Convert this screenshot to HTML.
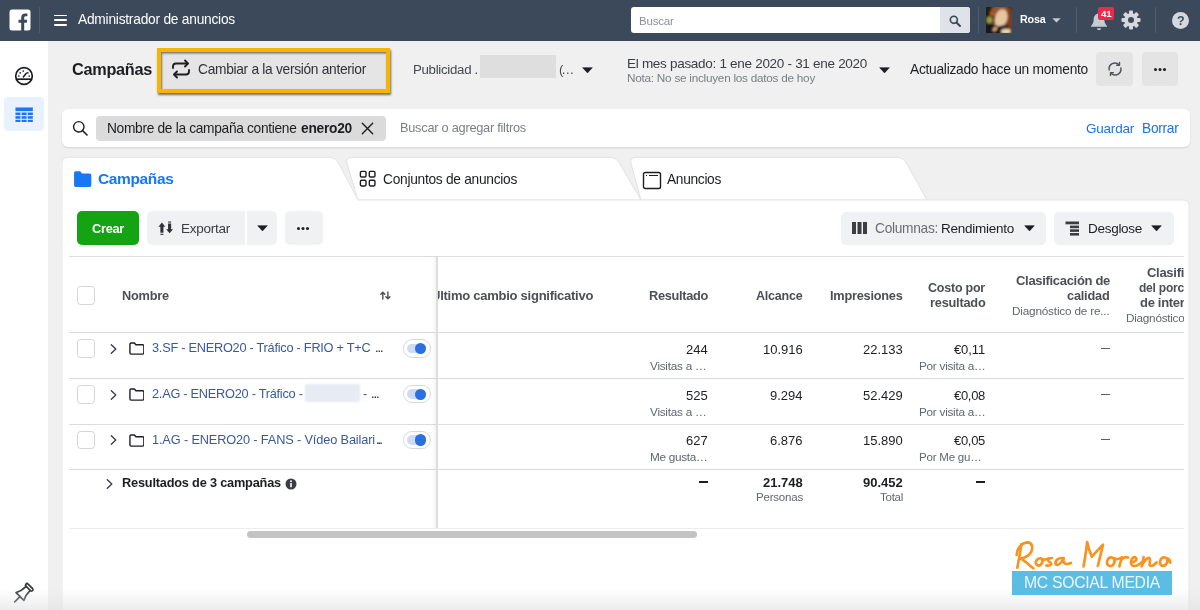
<!DOCTYPE html>
<html><head><meta charset="utf-8">
<style>
*{box-sizing:border-box;margin:0;padding:0}
html,body{width:1200px;height:610px;overflow:hidden;background:#f0f0f0;font-family:"Liberation Sans",sans-serif;color:#1c1e21}
.a{position:absolute}
.t{position:absolute;white-space:nowrap;line-height:1;will-change:transform}
.btn{position:absolute;background:#e4e4e4;border-radius:4px}
.cb{position:absolute;width:18px;height:18.500px;border:1px solid #d3d5d8;border-radius:3.500px;background:#fff}
.hl{position:absolute;height:1px;background:#dddddd}
</style></head><body>
<div class="a" style="left:0;top:0;width:1200px;height:40.500px;background:#3b495b"></div>
<div class="a" style="left:0;top:40.500px;width:48px;height:570px;background:#fff"></div>
<svg class="a" style="left:9px;top:9px" width="22" height="22" viewBox="0 0 22 22"><rect x="0.500" y="0.500" width="21" height="21" rx="2.500" fill="#fff"/><path d="M15.200 22v-8.200h2.600l.4-3.100h-3V8.800c0-.9.300-1.500 1.600-1.500h1.600V4.500c-.3 0-1.200-.1-2.300-.1-2.300 0-3.900 1.400-3.900 4v2.300H9.500v3.100h2.700V22z" fill="#3b495b"/></svg>
<div class="a" style="left:39px;top:7px;width:1.200px;height:26px;background:#4f5d74"></div>
<div class="a" style="left:978px;top:7px;width:1.200px;height:26px;background:#4f5d74"></div>
<div class="a" style="left:1076px;top:7px;width:1.200px;height:26px;background:#4f5d74"></div>
<div class="a" style="left:1155px;top:7px;width:1.200px;height:26px;background:#4f5d74"></div>
<div class="a" style="left:53.700px;top:14.7px;width:13.500px;height:1.700px;background:#fff;border-radius:1px"></div>
<div class="a" style="left:53.700px;top:19.3px;width:13.500px;height:1.700px;background:#fff;border-radius:1px"></div>
<div class="a" style="left:53.700px;top:24px;width:13.500px;height:1.700px;background:#fff;border-radius:1px"></div>
<div class="t" style="top:13px;font-size:13.75px;color:#fff;letter-spacing:-0.232px;left:78px;">Administrador de anuncios</div>
<div class="a" style="left:631px;top:7px;width:339px;height:26px;background:#fff;border-radius:3px;overflow:hidden"><div class="a" style="right:0;top:0;width:30px;height:26px;background:#dfe2e8"></div></div>
<div class="t" style="top:16px;font-size:11.5px;color:#8c9199;letter-spacing:-0.215px;left:639px;">Buscar</div>
<svg class="a" style="left:948.600px;top:14.600px" width="12.300" height="12.300" viewBox="0 0 14 14"><circle cx="5.500" cy="5.500" r="4" fill="none" stroke="#3a4350" stroke-width="1.800"/><path d="M8.500 8.500L12.500 12.500" stroke="#3a4350" stroke-width="2.200" stroke-linecap="round"/></svg>
<svg class="a" style="left:986px;top:7px" width="26" height="26" viewBox="0 0 26 26"><defs><filter id="bl" x="-20%" y="-20%" width="140%" height="140%"><feGaussianBlur stdDeviation="1.100"/></filter><clipPath id="cp"><rect width="26" height="26"/></clipPath></defs><g clip-path="url(#cp)"><rect width="26" height="26" fill="#5e3421"/><g filter="url(#bl)"><rect x="-2" y="-2" width="8" height="30" fill="#1d2418"/><ellipse cx="3.500" cy="13" rx="3" ry="3.500" fill="#9a9a3c"/><ellipse cx="6.500" cy="6.500" rx="2.500" ry="2.500" fill="#c45f28"/><ellipse cx="14" cy="3.500" rx="9" ry="5" fill="#9a5530"/><ellipse cx="23.500" cy="13" rx="3.200" ry="11" fill="#7a3f22"/><ellipse cx="15" cy="11.500" rx="6.300" ry="9.500" fill="#e6c6a0" transform="rotate(18 15 11.500)"/><path d="M-1 17L9 18L15 20L22 27L-1 27z" fill="#15121f"/><path d="M12 19.500L20 17.500L23 20L17 22z" fill="#1c1626"/><ellipse cx="20" cy="24.500" rx="5" ry="2.800" fill="#e8d6b0"/><ellipse cx="9" cy="22" rx="3" ry="1.800" fill="#d9a070" transform="rotate(-40 9 22)"/></g></g></svg>
<div class="t" style="top:14px;font-size:10.75px;color:#fff;font-weight:bold;letter-spacing:-0.197px;left:1020px;">Rosa</div>
<svg class="a" style="left:1052.400px;top:18.200px" width="9" height="5" viewBox="0 0 9 5"><path d="M0.300 0.300h8.400L4.500 4.600z" fill="#c5cad3"/></svg>
<svg class="a" style="left:1089px;top:11.500px" width="20" height="20" viewBox="0 0 20 20"><path d="M10 1.500c-3.300 0-5.300 2.500-5.300 5.800 0 3.200-1.200 5.200-2.700 6.700v.8h16V14c-1.500-1.500-2.700-3.500-2.700-6.700 0-3.300-2-5.800-5.300-5.800z" fill="#c5cad3"/><path d="M8 16.200a2 2 0 0 0 4 0z" fill="#c5cad3"/></svg>
<div class="a" style="left:1098px;top:6.800px;width:16px;height:13px;background:#f02849;border-radius:2px"></div>
<div class="t" style="top:9px;font-size:9.75px;color:#fff;font-weight:bold;letter-spacing:-0.173px;left:1100.5px;">41</div>
<svg class="a" style="left:1121px;top:10.300px" width="20" height="20" viewBox="0 0 20 20"><g fill="#d5d8de"><circle cx="10" cy="10" r="6.800"/><rect x="8" y="0.500" width="4" height="19" rx="1"/><rect x="8" y="0.500" width="4" height="19" rx="1" transform="rotate(45 10 10)"/><rect x="8" y="0.500" width="4" height="19" rx="1" transform="rotate(90 10 10)"/><rect x="8" y="0.500" width="4" height="19" rx="1" transform="rotate(135 10 10)"/></g><circle cx="10" cy="10" r="3" fill="#3b495b"/></svg>
<div class="a" style="left:1172px;top:12.300px;width:16.500px;height:16.500px;border-radius:8.500px;background:#d5d8de"></div>
<div class="t" style="top:15px;font-size:12.5px;color:#3b495b;font-weight:bold;left:1176.7px;">?</div>
<svg class="a" style="left:12.700px;top:65.400px" width="22" height="22" viewBox="0 0 22 22"><circle cx="11" cy="11" r="8.300" fill="none" stroke="#1c1e21" stroke-width="1.700"/><path d="M3.300 14.200h15.400" stroke="#1c1e21" stroke-width="1.700"/><path d="M10.300 12l3-3.800" stroke="#1c1e21" stroke-width="1.500" stroke-linecap="round"/><circle cx="5.800" cy="11" r="0.850" fill="#1c1e21"/><circle cx="7.200" cy="7.800" r="0.850" fill="#1c1e21"/><circle cx="10.300" cy="6" r="0.850" fill="#1c1e21"/><circle cx="14.800" cy="7.800" r="0.850" fill="#1c1e21"/><circle cx="16.200" cy="11" r="0.850" fill="#1c1e21"/></svg>
<div class="a" style="left:4px;top:97px;width:40px;height:34px;border-radius:4px;background:#e9f1fd"></div>
<svg class="a" style="left:14.600px;top:106.600px" width="18.300" height="15.600" viewBox="0 0 20 17"><g fill="#1877f2"><rect x="0.500" y="0.500" width="19" height="4"/><rect x="0.5" y="6" width="5.5" height="2.8"/><rect x="7.2" y="6" width="5.5" height="2.8"/><rect x="13.9" y="6" width="5.6" height="2.8"/><rect x="0.5" y="10" width="5.5" height="2.8"/><rect x="7.2" y="10" width="5.5" height="2.8"/><rect x="13.9" y="10" width="5.6" height="2.8"/><rect x="0.5" y="14" width="5.5" height="2.5"/><rect x="7.2" y="14" width="5.5" height="2.5"/><rect x="13.9" y="14" width="5.6" height="2.5"/></g></svg>
<svg class="a" style="left:8px;top:580px" width="30" height="30" viewBox="-15 -15 30 30"><g transform="translate(-0.500,-1) rotate(45)" fill="none" stroke="#33363b" stroke-width="1.700" stroke-linejoin="round" stroke-linecap="round"><rect x="-4.600" y="-11" width="9.200" height="3" rx="1.500"/><path d="M-2.800 -8C-2.800 -3 -3.500 0 -5.500 3.600H5.500C3.500 0 2.800 -3 2.800 -8"/><path d="M0 3.600V11"/></g></svg>
<div class="t" style="top:61px;font-size:16.25px;color:#1c1e21;font-weight:bold;letter-spacing:-0.274px;left:72px;">Campañas</div>
<div class="a" style="left:157px;top:48px;width:233px;height:45px;background:#e5e5e5;border:4.500px solid #f7b500;box-shadow:1px 1.500px 2px rgba(0,0,0,.55),inset 1px 1.500px 2px rgba(0,0,0,.5)"></div>
<svg class="a" style="left:171px;top:59px" width="20" height="20" viewBox="0 0 20 20"><g fill="none" stroke="#1c1e21" stroke-width="1.850" stroke-linecap="round" stroke-linejoin="round"><path d="M2 9V7.500c0-1.700 1.300-3 3-3h11.500"/><path d="M14 1.500l3 3-3 3"/><path d="M18 11v1.500c0 1.700-1.300 3-3 3H3.500"/><path d="M6 12.500l-3 3 3 3"/></g></svg>
<div class="t" style="top:63px;font-size:13.75px;color:#2f3237;letter-spacing:-0.294px;left:198px;">Cambiar a la versión anterior</div>
<div class="t" style="top:63px;font-size:13.25px;color:#444950;letter-spacing:-0.292px;left:413px;">Publicidad .</div>
<div class="a" style="left:480px;top:55px;width:76px;height:23px;background:#dedede;filter:blur(0.700px)"></div>
<div class="t" style="top:63px;font-size:13.0px;color:#444950;letter-spacing:-2.165px;left:559px;">(…</div>
<svg class="a" style="left:582px;top:67px" width="11" height="7" viewBox="0 0 11 7"><path d="M0.700 0.700h9.600L5.500 5.900z" fill="#1c1e21" stroke="#1c1e21" stroke-width="0.600" stroke-linejoin="round"/></svg>
<div class="t" style="top:57px;font-size:13.5px;color:#3a3d42;letter-spacing:-0.293px;left:627px;">El mes pasado: 1 ene 2020 - 31 ene 2020</div>
<div class="t" style="top:72px;font-size:11.75px;color:#7a7e85;letter-spacing:-0.250px;left:627px;">Nota: No se incluyen los datos de hoy</div>
<svg class="a" style="left:879px;top:67px" width="11" height="7" viewBox="0 0 11 7"><path d="M0.700 0.700h9.600L5.500 5.900z" fill="#1c1e21" stroke="#1c1e21" stroke-width="0.600" stroke-linejoin="round"/></svg>
<div class="t" style="top:63px;font-size:13.75px;color:#1c1e21;letter-spacing:-0.258px;left:910px;">Actualizado hace un momento</div>
<div class="btn" style="left:1096px;top:52px;width:37px;height:34px"></div>
<svg class="a" style="left:1107.200px;top:61px" width="16" height="16" viewBox="0 0 17 17"><g fill="none" stroke="#50545b" stroke-width="1.500" stroke-linecap="round" stroke-linejoin="round"><path d="M2.300 9.500a6.200 6.200 0 0 1 10.500-5.500"/><path d="M13.300 1.500v3h-3"/><path d="M14.700 7.500a6.200 6.200 0 0 1-10.500 5.500"/><path d="M3.700 15.500v-3h3"/></g></svg>
<div class="btn" style="left:1142px;top:52px;width:36px;height:34px"></div>
<div class="a" style="left:1154px;top:67.5px;width:3px;height:3px;border-radius:2px;background:#1c1e21;box-shadow:4.500px 0 0 #1c1e21,9px 0 0 #1c1e21"></div>
<div class="a" style="left:62px;top:109px;width:1128px;height:38px;background:#fff;border-radius:6px;box-shadow:0 1px 2px rgba(0,0,0,.12)"></div>
<svg class="a" style="left:72px;top:120px" width="17" height="17" viewBox="0 0 17 17"><circle cx="6.800" cy="6.800" r="5.200" fill="none" stroke="#1c1e21" stroke-width="1.400"/><path d="M10.700 10.700L15 15" stroke="#1c1e21" stroke-width="1.600" stroke-linecap="round"/></svg>
<div class="a" style="left:96px;top:115.700px;width:289.500px;height:25.300px;background:#dbdbdb;border-radius:4px"></div>
<div class="t" style="top:122px;font-size:13.75px;color:#1c1e21;letter-spacing:-0.319px;left:107px;">Nombre de la campaña contiene </div>
<div class="t" style="top:122px;font-size:13.75px;color:#1c1e21;font-weight:bold;letter-spacing:-0.248px;left:301px;">enero20</div>
<svg class="a" style="left:360.600px;top:122.300px" width="13" height="13" viewBox="0 0 13 13"><path d="M1.300 1.300l10.400 10.400M11.700 1.300l-10.400 10.400" stroke="#1c1e21" stroke-width="1.400" stroke-linecap="round"/></svg>
<div class="t" style="top:122px;font-size:12.75px;color:#7a7e85;letter-spacing:-0.242px;left:399.5px;">Buscar o agregar filtros</div>
<div class="t" style="top:122px;font-size:13.5px;color:#1b74e4;letter-spacing:-0.218px;left:1086px;">Guardar</div>
<div class="t" style="top:122px;font-size:13.75px;color:#1b74e4;letter-spacing:-0.284px;left:1142px;">Borrar</div>
<svg class="a" style="left:62px;top:155px" width="1130" height="456" viewBox="0 0 1130 456">
<path d="M579 45L569 8.400q-1.500-6 5-6H836q5 0 8 5L865 45z" fill="#fff" stroke="#e2e2e2" stroke-width="1"/>
<path d="M296 45L285 8.400q-1.500-6 5-6H549q5 0 8 5L579 45z" fill="#fff" stroke="#e2e2e2" stroke-width="1"/>
<path d="M0 456V8.400q0-6 6-6H268q5 0 8 5L296 45H1121q6 0 6 6V456z" fill="#fff" stroke="#e6e6e6" stroke-width="1"/>
</svg>
<svg class="a" style="left:73.400px;top:170.100px" width="19.400" height="18" viewBox="0 0 18 16" preserveAspectRatio="none"><path d="M1 2.500q0-1.500 1.500-1.500h4.200l1.600 2H15.500q1.500 0 1.500 1.500V13.500q0 1.500-1.500 1.500H2.500q-1.500 0-1.500-1.500z" fill="#1877f2"/></svg>
<div class="t" style="top:171px;font-size:15.5px;color:#1877f2;font-weight:bold;letter-spacing:-0.362px;left:98.2px;">Campañas</div>
<svg class="a" style="left:358.700px;top:170.300px" width="17.800" height="17.800" viewBox="0 0 19 19"><g fill="none" stroke="#1c1e21" stroke-width="1.500"><rect x="1.500" y="1.500" width="6" height="6" rx="1.200"/><rect x="11" y="1.500" width="6" height="6" rx="1.200"/><rect x="1.500" y="11" width="6" height="6" rx="1.200"/><rect x="11" y="11" width="6" height="6" rx="1.200"/></g></svg>
<div class="t" style="top:173px;font-size:13.75px;color:#1c1e21;letter-spacing:-0.281px;left:383px;">Conjuntos de anuncios</div>
<svg class="a" style="left:642px;top:170.700px" width="20" height="19" viewBox="0 0 20 19"><rect x="1.500" y="1.500" width="17" height="16" rx="1.800" fill="none" stroke="#1c1e21" stroke-width="1.400"/><path d="M4 4.500h1M7 4.500h9" stroke="#1c1e21" stroke-width="1.200"/></svg>
<div class="t" style="top:173px;font-size:13.75px;color:#1c1e21;letter-spacing:-0.321px;left:667px;">Anuncios</div>
<div class="a" style="left:77px;top:211px;width:62px;height:34px;background:#13a313;border-radius:5px"></div>
<div class="t" style="top:223px;font-size:12.75px;color:#fff;font-weight:bold;letter-spacing:-0.263px;left:92px;">Crear</div>
<div class="a" style="left:147px;top:211px;width:98px;height:34px;background:#f0f1f2;border-radius:5px 0 0 5px"></div>
<div class="a" style="left:247px;top:211px;width:30px;height:34px;background:#f0f1f2;border-radius:0 5px 5px 0"></div>
<svg class="a" style="left:157.500px;top:221px" width="16" height="16" viewBox="0 0 16 16"><g fill="#2f3237"><path d="M3.900 1.600L0.500 5.800h1.850V11.700h3.100V5.800h1.850z"/><rect x="2.400" y="12.800" width="3" height="1.100"/><path d="M11.600 12.300L8.200 8.200h1.850V2.600h3.100V8.200h1.850z"/><rect x="10.100" y="0.500" width="3" height="1.100"/></g></svg>
<div class="t" style="top:222px;font-size:13.5px;color:#3a3d42;letter-spacing:-0.253px;left:181px;">Exportar</div>
<svg class="a" style="left:257px;top:225px" width="11" height="7" viewBox="0 0 11 7"><path d="M0.700 0.700h9.600L5.500 5.900z" fill="#1c1e21" stroke="#1c1e21" stroke-width="0.600" stroke-linejoin="round"/></svg>
<div class="a" style="left:285px;top:211px;width:38px;height:34px;background:#f0f1f2;border-radius:5px"></div>
<div class="a" style="left:297px;top:227px;width:3px;height:3px;border-radius:2px;background:#1c1e21;box-shadow:4.500px 0 0 #1c1e21,9px 0 0 #1c1e21"></div>
<div class="a" style="left:841px;top:212px;width:205px;height:33px;background:#f0f1f2;border-radius:5px"></div>
<div class="a" style="left:852px;top:222px;width:4px;height:12px;background:#3a3d42;box-shadow:5.500px 0 0 #3a3d42,11px 0 0 #3a3d42"></div>
<div class="t" style="top:222px;font-size:13.75px;color:#6a6e74;letter-spacing:-0.303px;left:875px;">Columnas:</div>
<div class="t" style="top:222px;font-size:13.5px;color:#1c1e21;letter-spacing:-0.254px;left:941px;">Rendimiento</div>
<svg class="a" style="left:1024px;top:225px" width="11" height="7" viewBox="0 0 11 7"><path d="M0.700 0.700h9.600L5.500 5.900z" fill="#1c1e21" stroke="#1c1e21" stroke-width="0.600" stroke-linejoin="round"/></svg>
<div class="a" style="left:1054px;top:212px;width:120px;height:33px;background:#f0f1f2;border-radius:5px"></div>
<svg class="a" style="left:1065px;top:221px" width="15" height="15" viewBox="0 0 15 15"><g fill="#3a3d42"><rect x="0.500" y="0.500" width="13.500" height="2.800"/><rect x="5" y="4.600" width="9" height="2.600"/><rect x="5" y="8.300" width="9" height="2.600"/><rect x="5" y="12" width="9" height="2.600"/></g></svg>
<div class="t" style="top:222px;font-size:13.5px;color:#1c1e21;letter-spacing:-0.285px;left:1088px;">Desglose</div>
<svg class="a" style="left:1151px;top:225px" width="11" height="7" viewBox="0 0 11 7"><path d="M0.700 0.700h9.600L5.500 5.900z" fill="#1c1e21" stroke="#1c1e21" stroke-width="0.600" stroke-linejoin="round"/></svg>
<div class="hl" style="left:69px;top:256.2px;width:1115px;background:#dcdcdc"></div>
<div class="hl" style="left:69px;top:332.1px;width:1115px;background:#dcdcdc"></div>
<div class="hl" style="left:69px;top:378.2px;width:1115px;background:#dcdcdc"></div>
<div class="hl" style="left:69px;top:423.8px;width:1115px;background:#dcdcdc"></div>
<div class="hl" style="left:69px;top:468.6px;width:1115px;background:#dcdcdc"></div>
<div class="hl" style="left:69px;top:528px;width:1115px;background:#ededed"></div>
<div class="a" style="left:431px;top:257px;width:6px;height:271px;background:linear-gradient(to right,rgba(0,0,0,0),rgba(0,0,0,.05))"></div>
<div class="a" style="left:436px;top:257px;width:2px;height:271px;background:#dedede"></div>
<div class="cb" style="left:77px;top:286px"></div>
<div class="t" style="top:290px;font-size:12.75px;color:#4b4f56;font-weight:bold;letter-spacing:-0.196px;left:122px;">Nombre</div>
<svg class="a" style="left:380.300px;top:290.800px" width="11" height="9" viewBox="0 0 11 9"><g fill="none" stroke="#4b4f56" stroke-width="1.400" stroke-linecap="round" stroke-linejoin="round"><path d="M2.800 8V1.200M0.800 3.200L2.800 1.200l2 2"/><path d="M7.900 1v6.800M5.900 5.800l2 2 2-2"/></g></svg>
<div class="a" style="left:438px;top:257px;width:746px;height:271px;overflow:hidden">
<div class="t" style="top:32px;font-size:13.0px;color:#4b4f56;font-weight:bold;letter-spacing:-0.255px;right:591.26px;">Último cambio significativo</div>
<div class="t" style="top:33px;font-size:12.75px;color:#4b4f56;font-weight:bold;letter-spacing:-0.293px;left:211px;">Resultado</div>
<div class="t" style="top:33px;font-size:12.5px;color:#4b4f56;font-weight:bold;letter-spacing:-0.206px;right:381.71px;">Alcance</div>
<div class="t" style="top:33px;font-size:12.75px;color:#4b4f56;font-weight:bold;letter-spacing:-0.237px;right:281.74px;">Impresiones</div>
<div class="t" style="top:25px;font-size:12.5px;color:#4b4f56;font-weight:bold;letter-spacing:-0.225px;right:198.72px;">Costo por</div>
<div class="t" style="top:40px;font-size:12.75px;color:#4b4f56;font-weight:bold;letter-spacing:-0.210px;right:198.71px;">resultado</div>
<div class="t" style="top:17px;font-size:13.0px;color:#4b4f56;font-weight:bold;letter-spacing:-0.311px;right:74.31px;">Clasificación de</div>
<div class="t" style="top:33px;font-size:12.75px;color:#4b4f56;font-weight:bold;letter-spacing:-0.205px;right:74.20px;">calidad</div>
<div class="t" style="top:48px;font-size:11.75px;color:#606770;letter-spacing:-0.187px;right:74.19px;">Diagnóstico de re...</div>
<div class="t" style="top:9px;font-size:13.0px;color:#4b4f56;font-weight:bold;letter-spacing:-0.288px;left:709px;">Clasificación</div>
<div class="t" style="top:25px;font-size:12.0px;color:#4b4f56;font-weight:bold;letter-spacing:-0.210px;left:700.5px;">del porcentaje</div>
<div class="t" style="top:39px;font-size:13.0px;color:#4b4f56;font-weight:bold;letter-spacing:-0.307px;left:701.5px;">de interacción</div>
<div class="t" style="top:55px;font-size:11.75px;color:#606770;letter-spacing:-0.263px;left:687.5px;">Diagnóstico de</div>
<div class="t" style="top:86px;font-size:13.0px;color:#1c1e21;right:476.00px;">244</div>
<div class="t" style="top:103px;font-size:11.75px;color:#606770;letter-spacing:-0.246px;left:211.5px;">Visitas a …</div>
<div class="t" style="top:86px;font-size:13.0px;color:#1c1e21;right:381.00px;">10.916</div>
<div class="t" style="top:86px;font-size:13.0px;color:#1c1e21;right:281.00px;">22.133</div>
<div class="t" style="top:86px;font-size:13.0px;color:#1c1e21;letter-spacing:-0.114px;right:199.11px;">€0,11</div>
<div class="t" style="top:103px;font-size:11.75px;color:#606770;letter-spacing:-0.259px;left:480.5px;">Por visita a…</div>
<div class="a" style="left:663px;top:91px;width:9px;height:1.300px;background:#5a6068"></div>
<div class="t" style="top:132px;font-size:13.0px;color:#1c1e21;right:476.00px;">525</div>
<div class="t" style="top:149px;font-size:11.75px;color:#606770;letter-spacing:-0.246px;left:211.5px;">Visitas a …</div>
<div class="t" style="top:132px;font-size:13.0px;color:#1c1e21;right:381.00px;">9.294</div>
<div class="t" style="top:132px;font-size:13.0px;color:#1c1e21;right:281.00px;">52.429</div>
<div class="t" style="top:132px;font-size:13.0px;color:#1c1e21;letter-spacing:-0.306px;right:199.31px;">€0,08</div>
<div class="t" style="top:149px;font-size:11.75px;color:#606770;letter-spacing:-0.259px;left:480.5px;">Por visita a…</div>
<div class="a" style="left:663px;top:137px;width:9px;height:1.300px;background:#5a6068"></div>
<div class="t" style="top:177px;font-size:13.0px;color:#1c1e21;right:476.00px;">627</div>
<div class="t" style="top:194px;font-size:11.75px;color:#606770;letter-spacing:-0.287px;left:211.5px;">Me gusta…</div>
<div class="t" style="top:177px;font-size:13.0px;color:#1c1e21;right:381.00px;">6.876</div>
<div class="t" style="top:177px;font-size:13.0px;color:#1c1e21;right:281.00px;">15.890</div>
<div class="t" style="top:177px;font-size:13.0px;color:#1c1e21;letter-spacing:-0.306px;right:199.31px;">€0,05</div>
<div class="t" style="top:195px;font-size:11.5px;color:#606770;letter-spacing:-0.205px;left:480.5px;">Por Me gu…</div>
<div class="a" style="left:663px;top:182px;width:9px;height:1.300px;background:#5a6068"></div>
<div class="a" style="left:260.5px;top:224.40000000000003px;width:9.500px;height:1.800px;background:#1c1e21"></div>
<div class="t" style="top:219px;font-size:13.0px;color:#1c1e21;font-weight:bold;right:381.00px;">21.748</div>
<div class="t" style="top:235px;font-size:11.5px;color:#606770;letter-spacing:-0.198px;right:381.20px;">Personas</div>
<div class="t" style="top:219px;font-size:13.0px;color:#1c1e21;font-weight:bold;right:281.00px;">90.452</div>
<div class="t" style="top:235px;font-size:11.5px;color:#606770;letter-spacing:-0.258px;right:281.26px;">Total</div>
<div class="a" style="left:537.5px;top:224.40000000000003px;width:9.500px;height:1.800px;background:#1c1e21"></div>
</div>
<div class="cb" style="left:77px;top:339.3px"></div>
<svg class="a" style="left:108.5px;top:342.7px" width="9" height="12" viewBox="0 0 9 12"><path d="M2.300 1.700L6.800 6 2.300 10.300" fill="none" stroke="#3a3d42" stroke-width="1.350" stroke-linecap="round" stroke-linejoin="round"/></svg>
<svg class="a" style="left:128.7px;top:342.3px" width="15.800" height="13" viewBox="0 0 17 14"><path d="M1 2.300q0-1.300 1.300-1.300h3.500l1.600 1.900H14.700q1.300 0 1.300 1.300V11.700q0 1.300-1.300 1.300H2.300q-1.300 0-1.300-1.300z" fill="none" stroke="#1c1e21" stroke-width="1.500" stroke-linejoin="round"/></svg>
<div class="t" style="top:342px;font-size:12.75px;color:#3b5998;letter-spacing:-0.254px;left:152.3px;">3.SF - ENERO20 - Tráfico - FRIO + T+C</div>
<div class="t" style="top:341px;font-size:13.0px;color:#1c1e21;letter-spacing:-1.112px;left:375px;">...</div>
<div class="a" style="left:403px;top:339.3px;width:27.700px;height:18.400px;border-radius:9.200px;border:1px solid #d6d8dc;background:#fff"></div><div class="a" style="left:406.800px;top:343.6px;width:19px;height:9.800px;border-radius:5px;background:#cddbf5"></div><div class="a" style="left:415px;top:342.8px;width:11.400px;height:11.400px;border-radius:6px;background:#2b6fe0"></div>
<div class="cb" style="left:77px;top:385.1px"></div>
<svg class="a" style="left:108.5px;top:388.5px" width="9" height="12" viewBox="0 0 9 12"><path d="M2.300 1.700L6.800 6 2.300 10.300" fill="none" stroke="#3a3d42" stroke-width="1.350" stroke-linecap="round" stroke-linejoin="round"/></svg>
<svg class="a" style="left:128.7px;top:388.1px" width="15.800" height="13" viewBox="0 0 17 14"><path d="M1 2.300q0-1.300 1.300-1.300h3.500l1.600 1.900H14.700q1.300 0 1.300 1.300V11.700q0 1.300-1.300 1.300H2.300q-1.300 0-1.300-1.300z" fill="none" stroke="#1c1e21" stroke-width="1.500" stroke-linejoin="round"/></svg>
<div class="t" style="top:388px;font-size:12.75px;color:#3b5998;letter-spacing:-0.254px;left:152.3px;">2.AG - ENERO20 - Tráfico -</div>
<div class="a" style="left:304.500px;top:384.1px;width:55px;height:17.500px;background:#e6ebf4;border-radius:2px;filter:blur(1px)"></div>
<div class="t" style="top:388px;font-size:12.75px;color:#3b5998;left:363px;">-</div>
<div class="t" style="top:387px;font-size:13.0px;color:#1c1e21;letter-spacing:-1.112px;left:370.5px;">...</div>
<div class="a" style="left:403px;top:385.1px;width:27.700px;height:18.400px;border-radius:9.200px;border:1px solid #d6d8dc;background:#fff"></div><div class="a" style="left:406.800px;top:389.40000000000003px;width:19px;height:9.800px;border-radius:5px;background:#cddbf5"></div><div class="a" style="left:415px;top:388.6px;width:11.400px;height:11.400px;border-radius:6px;background:#2b6fe0"></div>
<div class="cb" style="left:77px;top:430.8px"></div>
<svg class="a" style="left:108.5px;top:434.2px" width="9" height="12" viewBox="0 0 9 12"><path d="M2.300 1.700L6.800 6 2.300 10.300" fill="none" stroke="#3a3d42" stroke-width="1.350" stroke-linecap="round" stroke-linejoin="round"/></svg>
<svg class="a" style="left:128.7px;top:433.8px" width="15.800" height="13" viewBox="0 0 17 14"><path d="M1 2.300q0-1.300 1.300-1.300h3.500l1.600 1.900H14.700q1.300 0 1.300 1.300V11.700q0 1.300-1.300 1.300H2.300q-1.300 0-1.300-1.300z" fill="none" stroke="#1c1e21" stroke-width="1.500" stroke-linejoin="round"/></svg>
<div class="t" style="top:434px;font-size:12.75px;color:#3b5998;letter-spacing:-0.140px;left:152.3px;">1.AG - ENERO20 - FANS - Vídeo Bailari</div>
<div class="t" style="top:433px;font-size:13.0px;color:#1c1e21;letter-spacing:-2.012px;left:376.3px;">...</div>
<div class="a" style="left:403px;top:430.8px;width:27.700px;height:18.400px;border-radius:9.200px;border:1px solid #d6d8dc;background:#fff"></div><div class="a" style="left:406.800px;top:435.1px;width:19px;height:9.800px;border-radius:5px;background:#cddbf5"></div><div class="a" style="left:415px;top:434.3px;width:11.400px;height:11.400px;border-radius:6px;background:#2b6fe0"></div>
<svg class="a" style="left:105px;top:478px" width="9" height="12" viewBox="0 0 9 12"><path d="M2.300 1.700L6.800 6 2.300 10.300" fill="none" stroke="#3a3d42" stroke-width="1.350" stroke-linecap="round" stroke-linejoin="round"/></svg>
<div class="t" style="top:477px;font-size:12.75px;color:#1c1e21;font-weight:bold;letter-spacing:-0.196px;left:122px;">Resultados de 3 campañas</div>
<svg class="a" style="left:284.500px;top:477.500px" width="12" height="12" viewBox="0 0 12 12"><circle cx="6" cy="6" r="5.500" fill="#3a3d42"/><rect x="5.200" y="5" width="1.600" height="4.200" fill="#fff"/><circle cx="6" cy="3.300" r="0.950" fill="#fff"/></svg>
<div class="a" style="left:247px;top:531px;width:450px;height:7px;border-radius:4px;background:#c4c4c4"></div>
<div class="a" style="left:0;top:588px;width:1200px;height:22px;background:linear-gradient(to bottom,rgba(225,225,225,0),rgba(225,225,225,.6))"></div>
<svg class="a" style="left:1000px;top:530px" width="200" height="80" viewBox="0 0 1200 480"><g fill="none" stroke="#f7931e" stroke-width="16" stroke-linecap="round" stroke-linejoin="round">
<path d="M128 86C122 130 112 185 104 226"/>
<path d="M100 150C100 110 130 76 165 74C195 74 200 110 185 135C170 158 145 168 124 172C150 185 175 210 200 230"/>
<path d="M245 170C222 166 206 195 221 209C240 222 264 195 251 173C262 180 278 178 292 170"/>
<path d="M312 168C292 168 280 184 298 193C316 202 306 217 278 213"/>
<path d="M378 170C356 162 328 184 334 204C340 220 372 200 382 168C377 195 386 214 426 198"/>
<path d="M523 72C518 120 510 170 501 219M523 72C530 105 540 135 551 160C575 135 598 108 618 88C608 130 597 175 587 216"/>
<path d="M672 165C645 160 632 200 652 214C675 225 700 190 680 168C700 180 715 175 730 165"/>
<path d="M730 165C726 185 720 203 716 218M728 180C740 165 755 160 768 165"/>
<path d="M785 195C810 195 830 175 812 164C790 155 770 215 805 216C825 216 845 200 860 185"/>
<path d="M862 162C860 185 855 203 850 218C862 188 888 158 898 170C906 185 892 203 900 214C910 220 925 210 940 195"/>
<path d="M990 165C962 160 950 200 970 213C992 224 1015 190 998 168C1010 170 1020 180 1022 196"/>
</g></svg>
<div class="a" style="left:1012px;top:570.500px;width:160px;height:24px;background:#5bbde4"></div>
<div class="t" style="top:575px;font-size:15.75px;color:rgba(255,255,255,.88);letter-spacing:-0.288px;left:1024px;">MC SOCIAL MEDIA</div>
</body></html>
